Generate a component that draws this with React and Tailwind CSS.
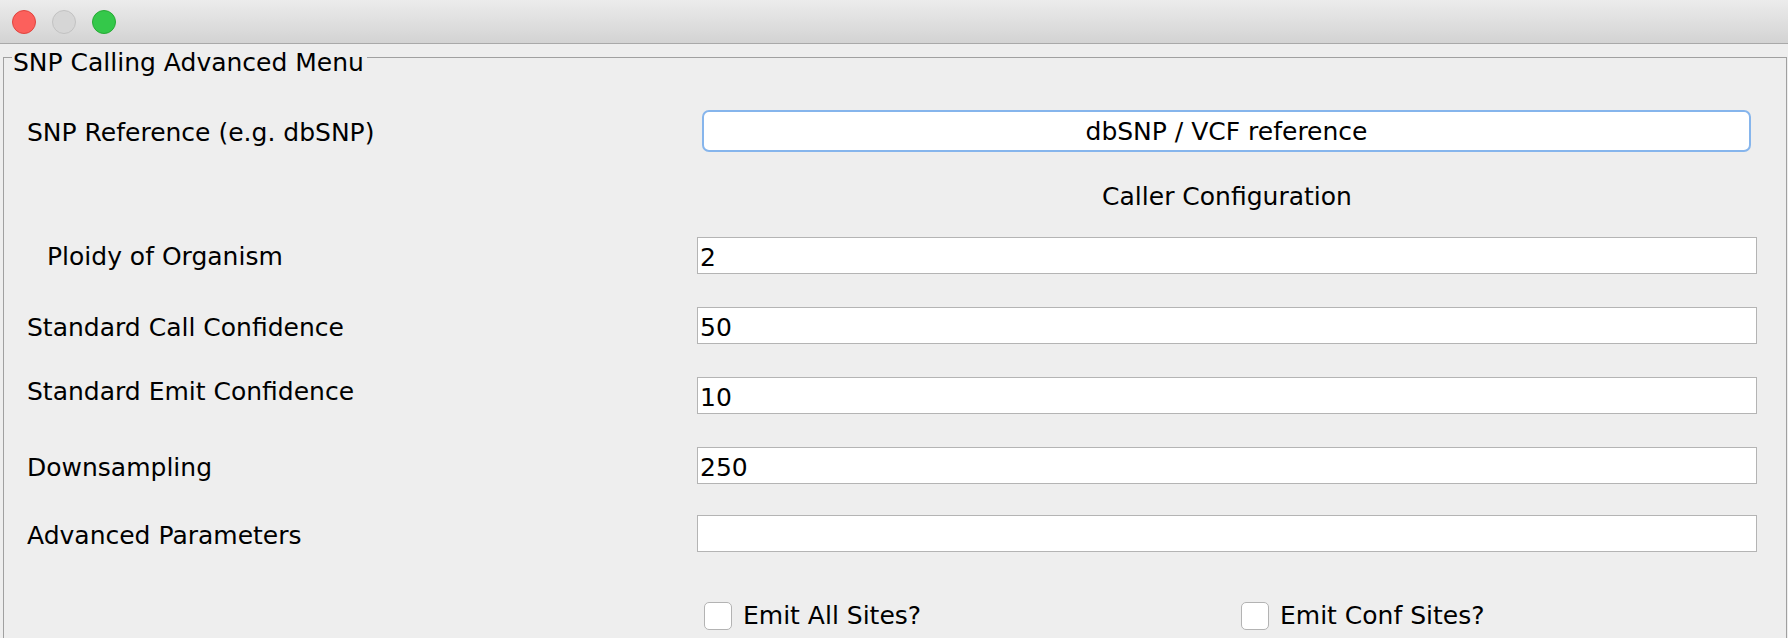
export default function App() {
  const fields = [
    { label: "Ploidy of Organism", value: "2", indent: true, lpt: "pt-[5px]", mt: "mt-[26px]" },
    { label: "Standard Call Confidence", value: "50", lpt: "pt-[6px]", mt: "mt-[33px]" },
    { label: "Standard Emit Confidence", value: "10", lpt: "pt-0", mt: "mt-[33px]" },
    { label: "Downsampling", value: "250", lpt: "pt-[6px]", mt: "mt-[33px]" },
    { label: "Advanced Parameters", value: "", lpt: "pt-[6px]", mt: "mt-[31px]" },
  ];

  return (
    <div className="w-full h-screen overflow-hidden bg-[#eeeeee] text-black font-['DejaVu_Sans',sans-serif] text-[25px]">
      {/* title bar */}
      <div className="h-[44px] border-b border-[#a9a9a9] bg-gradient-to-b from-[#ececec] to-[#d3d3d3] flex items-start pt-[10px] pl-[12px] gap-[16px]">
        <div className="w-[24px] h-[24px] rounded-full bg-[#fc605c] border border-[#e0443e]" />
        <div className="w-[24px] h-[24px] rounded-full bg-[#d6d6d6] border border-[#c2c2c2]" />
        <div className="w-[24px] h-[24px] rounded-full bg-[#34c84a] border border-[#27aa35]" />
      </div>

      <fieldset className="ml-[3px] mr-[1px] border border-[#a0a0a0] p-0 m-0 min-w-0">
        <legend className="ml-[8px] pl-[1px] pr-[3px] pt-[10px] leading-[17px]">SNP Calling Advanced Menu</legend>

        <div className="pl-[23px] pr-[29px] pb-[60px]">
          {/* reference row */}
          <div className="mt-[39px] flex items-start">
            <div className="w-[670px] shrink-0 pt-[8px] leading-[29px]">SNP Reference (e.g. dbSNP)</div>
            <div className="flex-1 pl-[5px] pr-[6px]">
              <div className="h-[42px] rounded-[7px] border-2 border-[#86b5ec] bg-white flex items-center justify-center leading-[29px]">
                dbSNP / VCF reference
              </div>
            </div>
          </div>

          {/* section heading */}
          <div className="mt-[30px] flex">
            <div className="w-[670px] shrink-0" />
            <div className="flex-1 text-center leading-[29px]">Caller Configuration</div>
          </div>

          {fields.map((f) => (
            <div key={f.label} className={`${f.mt} flex items-start`}>
              <div className={`w-[670px] shrink-0 leading-[29px] ${f.lpt} ${f.indent ? "pl-[20px]" : ""}`}>
                {f.label}
              </div>
              <div className="flex-1 h-[37px] bg-white border border-[#b4b4b4] pl-[2px] pt-[5px] leading-[29px]">
                {f.value}
              </div>
            </div>
          ))}

          {/* checkboxes */}
          <div className="mt-[49px] flex">
            <div className="w-[670px] shrink-0" />
            <div className="flex-1 grid grid-cols-2">
              <div className="flex items-center h-[29px] pl-[7px] gap-[11px] leading-[29px]">
                <div className="w-[28px] h-[28px] rounded-[5px] border border-[#b3b3b3] bg-white" />
                <span>Emit All Sites?</span>
              </div>
              <div className="flex items-center h-[29px] pl-[14px] gap-[11px] leading-[29px]">
                <div className="w-[28px] h-[28px] rounded-[5px] border border-[#b3b3b3] bg-white" />
                <span>Emit Conf Sites?</span>
              </div>
            </div>
          </div>
        </div>
      </fieldset>
    </div>
  );
}
